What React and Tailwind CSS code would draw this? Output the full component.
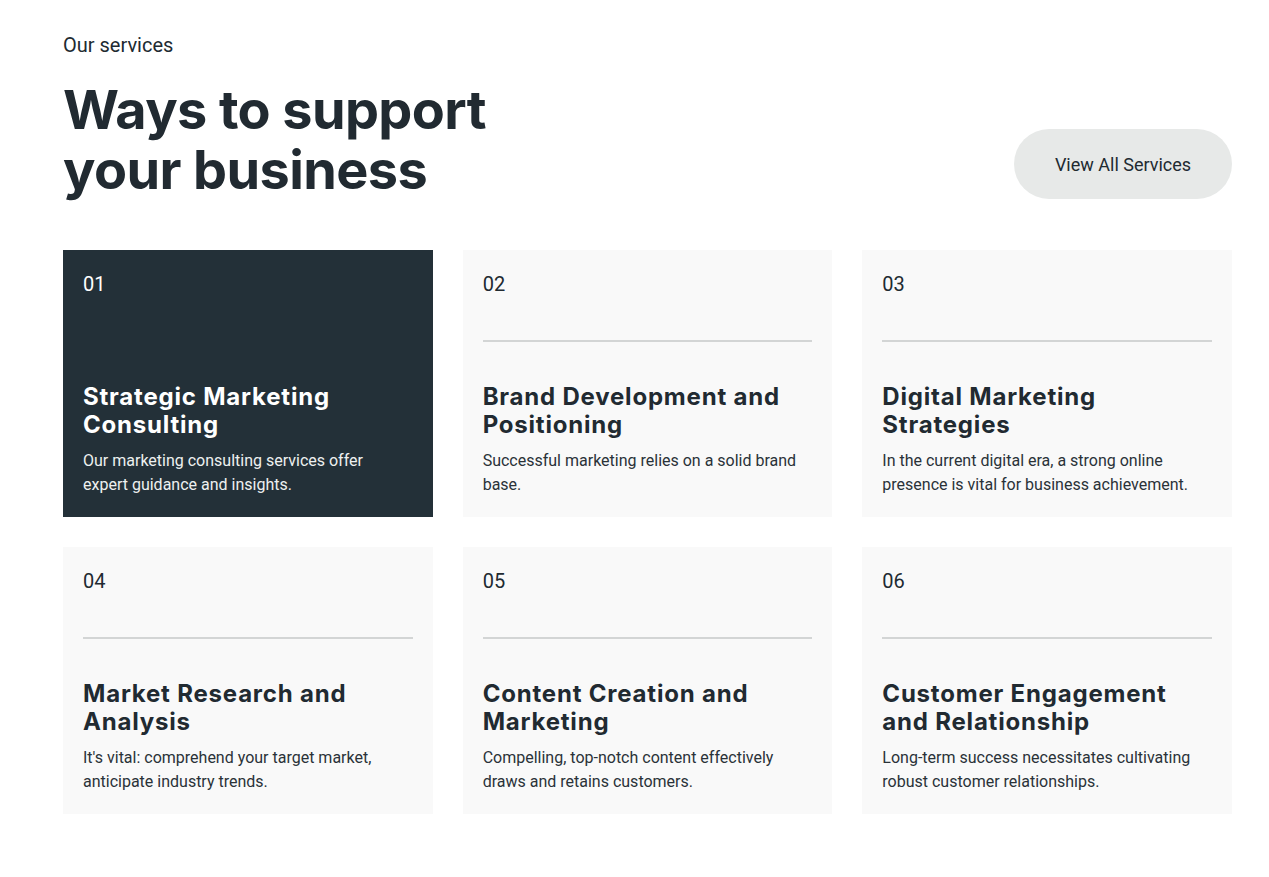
import React from 'react';

const services = [
    { id: '01', title: 'Strategic Marketing Consulting', text: 'Our marketing consulting services offer expert guidance and insights.', active: true },
    { id: '02', title: 'Brand Development and Positioning', text: 'Successful marketing relies on a solid brand base.' },
    { id: '03', title: 'Digital Marketing Strategies', text: 'In the current digital era, a strong online presence is vital for business achievement.' },
    { id: '04', title: 'Market Research and Analysis', text: "It's vital: comprehend your target market, anticipate industry trends." },
    { id: '05', title: 'Content Creation and Marketing', text: 'Compelling, top-notch content effectively draws and retains customers.' },
    { id: '06', title: 'Customer Engagement and Relationship', text: 'Long-term success necessitates cultivating robust customer relationships.' },
];

const heading = { fontFamily: 'Inter, "Noto Sans", sans-serif' };

const ServiceCard = ({ service }) => {
    const dark = service.active;
    return (
        <div className={`flex flex-col p-5 ${dark ? 'bg-[#233038] text-white' : 'bg-[#f9f9f9] text-[#212a31]'}`}>
            <span className="text-[20px] leading-[28px]">{service.id}</span>
            {/* divider is invisible on the active card */}
            <div className={`mt-[42px] h-[2px] ${dark ? 'bg-transparent' : 'bg-[#d3d5d5]'}`} />
            <h3 className="mt-[41px] text-[24px] leading-[28px] font-bold tracking-[0.8px] pr-2" style={heading}>
                {service.title}
            </h3>
            <p className={`mt-[10px] text-[16px] leading-[24px] pr-4 ${dark ? 'text-[#eef0f0]' : 'text-[#2a3238]'}`}>
                {service.text}
            </p>
        </div>
    );
};

const App = () => {
    return (
        <div className="min-h-[877px] bg-white text-[#212a31]" style={{ fontFamily: 'Roboto, "Liberation Sans", sans-serif' }}>
            <div className="w-[1169px] ml-[63px] pt-[31px]">
                <p className="text-[20px] leading-[28px]">Our services</p>

                <div className="flex items-end justify-between mt-[21px]">
                    <h2 className="text-[54px] leading-[60px] font-bold tracking-[-0.6px]" style={heading}>
                        Ways to support<br />your business
                    </h2>
                    <button className="mb-[1px] h-[70px] w-[218px] rounded-full bg-[#e7e9e8] text-[18px] text-[#212a31]">
                        View All Services
                    </button>
                </div>

                <div className="grid grid-cols-3 gap-[30px] mt-[50px]">
                    {services.map((s) => (
                        <ServiceCard key={s.id} service={s} />
                    ))}
                </div>
            </div>
        </div>
    );
};

export default App;
